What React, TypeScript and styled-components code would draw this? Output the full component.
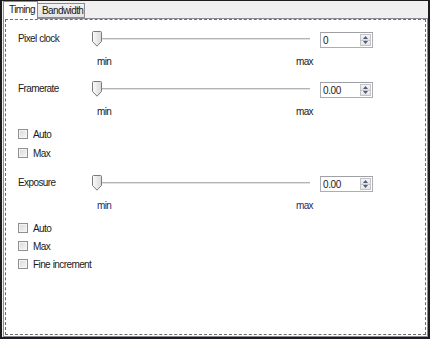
import React from 'react';
import styled, { createGlobalStyle } from 'styled-components';

const GlobalStyle = createGlobalStyle`
  html, body {
    margin: 0;
    padding: 0;
    background: #ffffff;
  }
  body {
    font-family: 'Liberation Sans', Arial, sans-serif;
    font-size: 10px;
    letter-spacing: -0.6px;
    word-spacing: 0.5px;
    color: #1a1a1a;
  }
`;

const Frame = styled.div`
  width: 430px;
  height: 339px;
  box-sizing: border-box;
  background: #f0f0f0;
  border-top: 1px solid #1c1c1c;
  border-left: 2px solid #1c1c1c;
  border-right: 2px solid #1c1c1c;
  border-bottom: 2px solid #1c1c1c;
  padding-left: 1px;
  display: flex;
  flex-direction: column;
`;

const TabStrip = styled.div`
  height: 17px;
  display: flex;
  align-items: flex-end;
  position: relative;
  z-index: 1;
`;

const Tab = styled.div<{ $active?: boolean; $width: number }>`
  box-sizing: border-box;
  width: ${(p) => p.$width}px;
  height: ${(p) => (p.$active ? '18px' : '15px')};
  margin-bottom: ${(p) => (p.$active ? '-1px' : '0')};
  padding-left: ${(p) => (p.$active ? '5px' : '4px')};
  padding-bottom: ${(p) => (p.$active ? '2px' : '0')};
  border: 1px solid #898c95;
  border-bottom: ${(p) => (p.$active ? 'none' : '1px solid #898c95')};
  border-left: ${(p) => (p.$active ? '1px solid #898c95' : 'none')};
  background: ${(p) => (p.$active ? '#ffffff' : 'linear-gradient(#f2f2f2, #e4e4e4)')};
  display: flex;
  align-items: center;
  line-height: 1;
  white-space: nowrap;
`;

const Panel = styled.div`
  flex: 1;
  box-sizing: border-box;
  border: 1px solid #898c95;
  background: #ffffff;
  padding: 0 1px 1px 1px;
  display: flex;
`;

const Focus = styled.div`
  flex: 1;
  border: 1px dashed #6a6a6a;
  padding: 12px 0 0 12px;
  display: flex;
  flex-direction: column;
`;

const SliderRow = styled.div<{ $gap: number }>`
  margin-top: ${(p) => p.$gap}px;
  display: flex;
  align-items: center;
  height: 16px;
`;

const Label = styled.div`
  width: 74px;
  margin-top: -3px;
`;

const Slider = styled.div`
  position: relative;
  width: 218px;
  height: 16px;
  display: flex;
  align-items: center;
`;

const Track = styled.div`
  width: 100%;
  height: 1px;
  background: #b4b4b4;
  border-bottom: 1px solid #e2e2e2;
  margin-top: -2px;
`;

const Thumb = styled.svg`
  position: absolute;
  left: 0;
  top: -1px;
`;

const Spin = styled.div`
  margin-left: 10px;
  box-sizing: border-box;
  width: 53px;
  height: 16px;
  border: 1px solid #abadb3;
  border-top-color: #9ea0a6;
  display: flex;
  align-items: stretch;
  background: #fff;
`;

const SpinValue = styled.div`
  flex: 1;
  padding-left: 2px;
  display: flex;
  align-items: center;
  letter-spacing: -0.4px;
`;

const SpinButtons = styled.div`
  width: 11px;
  margin: 1px 1px 1px 0;
  display: flex;
  flex-direction: column;
`;

const SpinButton = styled.div`
  flex: 1;
  box-sizing: border-box;
  border: 1px solid #c2c4c8;
  background: linear-gradient(#f6f6f6, #e2e2e2);
  display: flex;
  align-items: center;
  justify-content: center;
  & + & {
    border-top: none;
  }
`;

const Scale = styled.div<{ $gap: number; $tone?: string }>`
  margin-top: ${(p) => p.$gap}px;
  margin-left: 79px;
  width: 216px;
  height: 12px;
  line-height: 12px;
  display: flex;
  justify-content: space-between;
  color: ${(p) => p.$tone || '#1a1a1a'};
`;

const CheckRow = styled.label<{ $gap: number }>`
  margin-top: ${(p) => p.$gap}px;
  height: 10px;
  display: flex;
  align-items: center;
  gap: 5px;
`;

const Box = styled.span`
  box-sizing: border-box;
  width: 10px;
  height: 10px;
  border: 1px solid #8f8f8f;
  background: linear-gradient(135deg, #d8d8d8, #f7f7f7);
  box-shadow: inset 0 0 0 1px #f4f4f4;
`;

const Arrow = ({ up }: { up?: boolean }) => (
  <svg width="5" height="3" viewBox="0 0 5 3">
    <path d={up ? 'M0 3 L2.5 0 L5 3 Z' : 'M0 0 L2.5 3 L5 0 Z'} fill="#4d5b7c" />
  </svg>
);

const SliderControl = ({
  label,
  value,
  gap,
}: {
  label: string;
  value: string;
  gap: number;
}) => (
  <SliderRow $gap={gap}>
    <Label>{label}</Label>
    <Slider>
      <Track />
      <Thumb width="10" height="16" viewBox="0 0 10 16">
        <defs>
          <linearGradient id="thumbFill" x1="0" y1="0" x2="1" y2="0">
            <stop offset="0" stopColor="#fbfbfb" />
            <stop offset="1" stopColor="#d9d9d9" />
          </linearGradient>
        </defs>
        <path
          d="M1.5 0.5 H8.5 Q9.5 0.5 9.5 1.5 V10.5 L5 15.2 L0.5 10.5 V1.5 Q0.5 0.5 1.5 0.5 Z"
          fill="url(#thumbFill)"
          stroke="#7a7a7a"
        />
      </Thumb>
    </Slider>
    <Spin>
      <SpinValue>{value}</SpinValue>
      <SpinButtons>
        <SpinButton>
          <Arrow up />
        </SpinButton>
        <SpinButton>
          <Arrow />
        </SpinButton>
      </SpinButtons>
    </Spin>
  </SliderRow>
);

const Check = ({ text, gap }: { text: string; gap: number }) => (
  <CheckRow $gap={gap}>
    <Box />
    <span>{text}</span>
  </CheckRow>
);

export default function App() {
  return (
    <>
      <GlobalStyle />
      <Frame>
        <TabStrip>
          <Tab $active $width={35}>Timing</Tab>
          <Tab $width={47}>Bandwidth</Tab>
        </TabStrip>
        <Panel>
          <Focus>
            <SliderControl label="Pixel clock" value="0" gap={0} />
            <Scale $gap={8}>
              <span>min</span>
              <span>max</span>
            </Scale>
            <SliderControl label="Framerate" value="0.00" gap={14} />
            <Scale $gap={8}>
              <span>min</span>
              <span>max</span>
            </Scale>
            <Check text="Auto" gap={11} />
            <Check text="Max" gap={9} />
            <SliderControl label="Exposure" value="0.00" gap={18} />
            <Scale $gap={8} $tone="#1f2a6c">
              <span>min</span>
              <span>max</span>
            </Scale>
            <Check text="Auto" gap={11} />
            <Check text="Max" gap={8} />
            <Check text="Fine increment" gap={8} />
          </Focus>
        </Panel>
      </Frame>
    </>
  );
}
